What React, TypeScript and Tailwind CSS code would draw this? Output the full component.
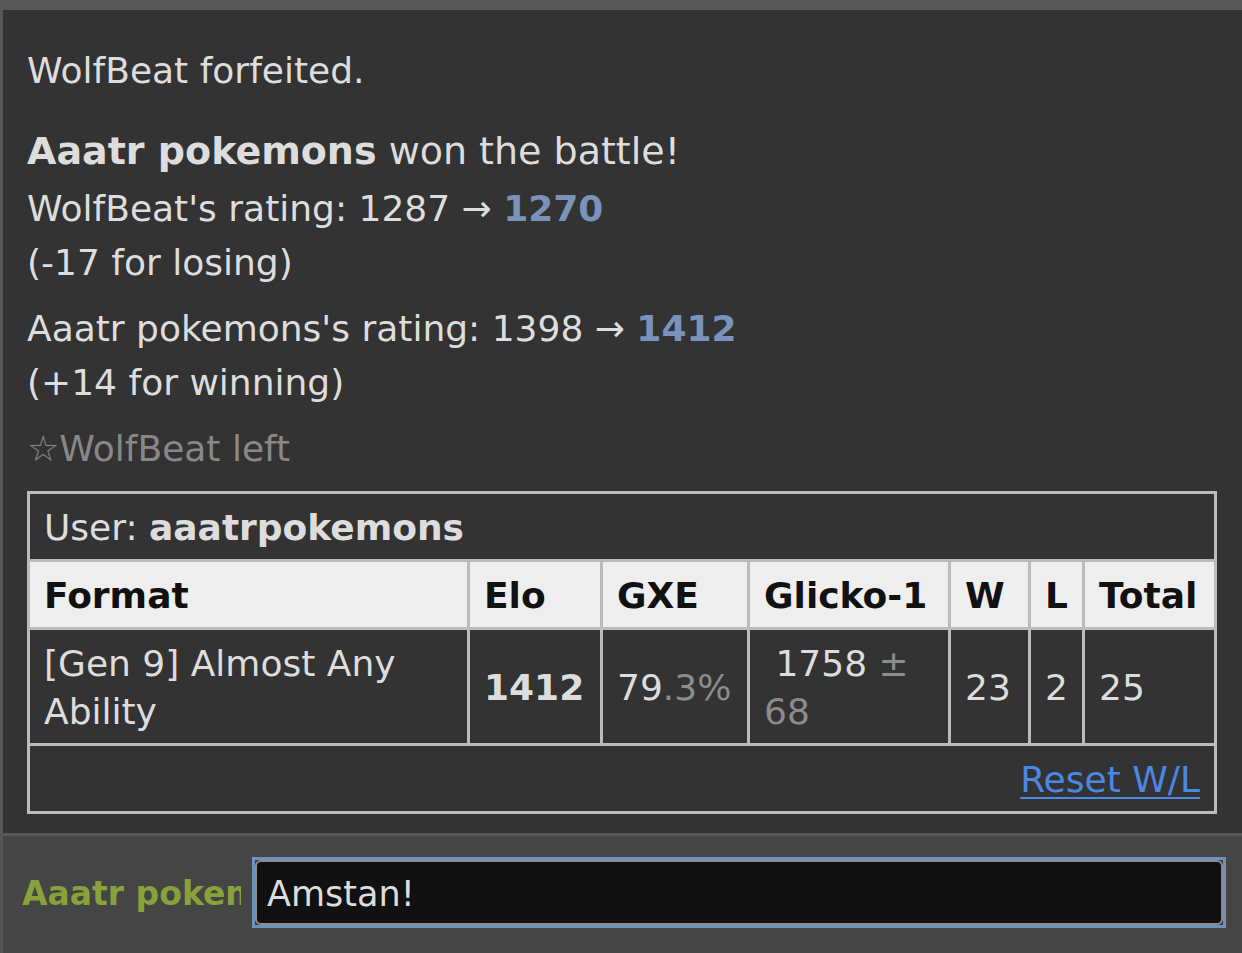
import type { ReactNode } from "react"

const font = { fontFamily: '"DejaVu Sans", Verdana, sans-serif' }

function HeadCell({ children }: { children: ReactNode }): ReactNode {
  return <div className="bg-[#eeeeee] px-[14px] pt-[10px] pb-[7px] font-bold text-[#111]">{children}</div>
}

function Cell({ children, middle }: { children: ReactNode; middle?: boolean }): ReactNode {
  return (
    <div className={"bg-[#333333] px-[14px] pt-[10px] pb-[7px] text-[#dddddd] " + (middle ? "flex items-center" : "")}>
      <div>{children}</div>
    </div>
  )
}

function LadderTable(): ReactNode {
  return (
    <div className="grid grid-cols-[437px_130px_144px_198px_77px_51px_129px] gap-[3px] bg-[#bbbbbb] p-[3px] text-[36px] leading-[48px]">
      <div className="col-span-7 bg-[#333333] px-[14px] pt-[10px] pb-[7px] text-[#dddddd]">
        User: <strong className="font-bold">aaatrpokemons</strong>
      </div>
      <HeadCell>Format</HeadCell>
      <HeadCell>Elo</HeadCell>
      <HeadCell>GXE</HeadCell>
      <HeadCell>Glicko-1</HeadCell>
      <HeadCell>W</HeadCell>
      <HeadCell>L</HeadCell>
      <HeadCell>Total</HeadCell>
      <Cell>[Gen 9] Almost Any Ability</Cell>
      <Cell middle><strong className="font-bold">1412</strong></Cell>
      <Cell middle>79<span className="text-[#8c8c8c]">.3%</span></Cell>
      <Cell>
        {"\u00a0"}1758 <span className="text-[#8c8c8c]">±</span>
        <br />
        <span className="text-[#8c8c8c]">68</span>
      </Cell>
      <Cell middle>23</Cell>
      <Cell middle>2</Cell>
      <Cell middle>25</Cell>
      <div className="col-span-7 bg-[#333333] px-[14px] pt-[10px] pb-[7px] text-right">
        <a href="#" className="text-[#4d87e4] underline underline-offset-[5px] decoration-2">Reset W/L</a>
      </div>
    </div>
  )
}

export default function App(): ReactNode {
  return (
    <div className="flex h-screen flex-col overflow-hidden bg-[#333333]" style={font}>
      <div className="h-[10px] shrink-0 bg-[#575757]" />
      <div className="flex-1 border-l-[3px] border-[#575757] pt-[34px] pr-[25px] pl-[24px] text-[36px] leading-[54px] text-[#dddddd]">
        <div>WolfBeat forfeited.</div>
        <div className="mt-[26px] text-[38px]">
          <strong className="font-bold">Aaatr pokemons</strong> won the battle!
        </div>
        <div className="mt-[4px]">
          WolfBeat's rating: 1287 → <strong className="font-bold text-[#7b93bb]">1270</strong>
          <br />
          (-17 for losing)
        </div>
        <div className="mt-[12px]">
          Aaatr pokemons's rating: 1398 → <strong className="font-bold text-[#7b93bb]">1412</strong>
          <br />
          (+14 for winning)
        </div>
        <div className="mt-[12px] text-[#888888]">☆WolfBeat left</div>
        <div className="mt-[15px]">
          <LadderTable />
        </div>
      </div>
      <div className="flex h-[120px] shrink-0 items-start border-t-[3px] border-l-[3px] border-[#575757] bg-[#454545] pt-[21px] pr-[16px] pl-[19px]">
        <div className="mt-[12px] w-[219px] shrink-0 overflow-hidden whitespace-nowrap text-[33px] font-bold text-[#88a13a]">
          Aaatr pokemons
        </div>
        <div className="ml-[11px] h-[71px] flex-1 border-[3px] border-[#6d92bb] bg-[#3a3a3a]">
          <div className="flex h-full items-center rounded-[6px] border-2 border-[#8c8c8c] bg-[#111111] pt-[4px] pl-[10px] text-[35px] text-[#dddddd]">
            Amstan!
          </div>
        </div>
      </div>
    </div>
  )
}
